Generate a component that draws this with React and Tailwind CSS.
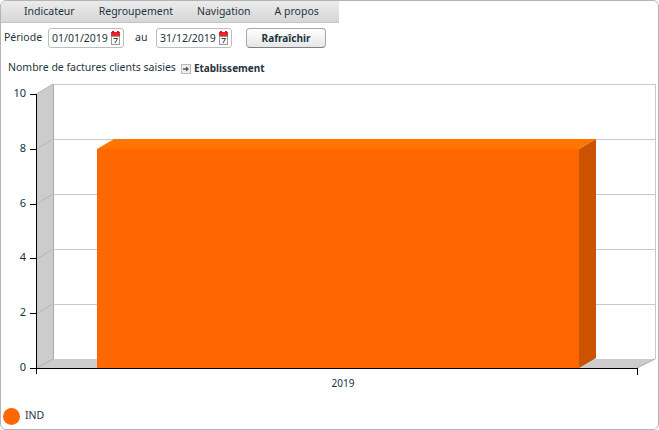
const font = "font-['Noto_Sans','Open_Sans',sans-serif]";

const menus = ['Indicateur', 'Regroupement', 'Navigation', 'A propos'];
const ticks = [
  { label: '10', y: 94 },
  { label: '8', y: 149 },
  { label: '6', y: 204 },
  { label: '4', y: 258 },
  { label: '2', y: 313 },
  { label: '0', y: 368 },
];
const gridLines = [84, 139, 194, 249, 304];

function CalendarIcon() {
  return (
    <svg width="9" height="14" viewBox="0 0 9 14" className="shrink-0">
      <rect x="0" y="1" width="9" height="5" fill="#e8262c" />
      <rect x="1" y="0" width="2" height="2" fill="#c8181e" />
      <rect x="6" y="0" width="2" height="2" fill="#c8181e" />
      <rect x="0.5" y="5.5" width="8" height="8" fill="#f6f6f2" stroke="#9a9a9a" />
      <path d="M2.5 7.5h4L4 12" fill="none" stroke="#444" strokeWidth="1" />
    </svg>
  );
}

function DateField({ value }) {
  return (
    <div className="flex items-center justify-between w-[76px] h-5 pl-[3px] pr-[3px] bg-white border border-[#bdbdbd] rounded-[3px]">
      <span className="text-[10.5px] leading-none">{value}</span>
      <CalendarIcon />
    </div>
  );
}

function Chart() {
  return (
    <svg width="657" height="322" viewBox="0 0 657 322" className="block">
      <g transform="translate(-1 -75)">
        {/* murs gris */}
        <polygon points="36,94 53,84 53,359 36,368" fill="#cccccc" />
        <polygon points="36,368 53,359 655,359 637,368" fill="#cccccc" />
        <path d="M36.5 94 L53 84 M36.5 149 L53 139 M36.5 204 L53 194 M36.5 259 L53 249 M36.5 314 L53 304" stroke="#b5b5b5" fill="none" />
        <path d="M53.5 84 V359 M36.5 368 L53 359 M637 368 L655 359" stroke="#aaaaaa" fill="none" />
        {gridLines.map((y) => (
          <line key={y} x1="53" x2="655" y1={y + 0.5} y2={y + 0.5} stroke="#c8c8c8" />
        ))}
        <line x1="655.5" x2="655.5" y1="84" y2="359" stroke="#c8c8c8" />

        {/* barre 2019 */}
        <polygon points="97,149 114,139 596,139 579,149" fill="#ff7700" />
        <rect x="97" y="149" width="482" height="219" fill="#ff6800" />
        <polygon points="579,149 596,139 596,358 579,368" fill="#cc5300" />

        {/* axes */}
        <line x1="36.5" x2="36.5" y1="94" y2="374" stroke="#000" />
        <line x1="30" x2="638" y1="368.5" y2="368.5" stroke="#000" />
        <line x1="637.5" x2="637.5" y1="368" y2="375" stroke="#000" />
        {ticks.map((t) => (
          <g key={t.label}>
            <line x1="30" x2="36" y1={t.y + 0.5} y2={t.y + 0.5} stroke="#000" />
            <text x="26" y={t.y + 3} textAnchor="end" fontSize="11" fill="#123344">{t.label}</text>
          </g>
        ))}
        <text x="343" y="387" textAnchor="middle" fontSize="10" fill="#123344">2019</text>
      </g>
    </svg>
  );
}

export default function App() {
  return (
    <div className={`${font} w-[659px] h-[430px] bg-white border border-[#b4b4b4] rounded-[6px] overflow-hidden text-[#1f3440] text-[10.5px] flex flex-col`}>
      <div className="flex items-center w-[338px] h-[22px] pl-[23px] gap-[24px] bg-gradient-to-b from-[#ececec] to-[#d6d6d6] border-b border-[#c4c4c4]">
        {menus.map((m) => (
          <span key={m}>{m}</span>
        ))}
      </div>
      <div className="flex items-center h-[28px] pl-[3px] mt-[1px]">
        <span className="w-[44px]">Période</span>
        <DateField value="01/01/2019" />
        <span className="ml-[11px] mr-[8px] w-[13px]">au</span>
        <DateField value="31/12/2019" />
        <button className="ml-[14px] w-[80px] h-5 rounded-[4px] border border-[#a8a8a8] border-b-[#808080] bg-gradient-to-b from-white to-[#e6e6e6] font-bold text-[10px] text-[#1f3440]">
          Rafraîchir
        </button>
      </div>
      <div className="flex items-center h-[14px] pl-[7px] mt-[9px] gap-[5px]">
        <span className="text-[10.5px]">Nombre de factures clients saisies</span>
        <svg width="10" height="10" viewBox="0 0 10 10" className="shrink-0 mt-[2px]">
          <rect x="0.5" y="0.5" width="9" height="9" fill="#eee" stroke="#bbb" />
          <path d="M2 5h4" fill="none" stroke="#555" strokeWidth="1.5" />
          <path d="M5 2.5 8 5 5 7.5z" fill="#555" />
        </svg>
        <span className="font-bold text-[10px] -ml-[2px]">Etablissement</span>
      </div>
      <Chart />
      <div className="flex items-center mt-[11px] pl-[2px] gap-[5px]">
        <span className="w-[17px] h-[17px] rounded-full bg-[#ff6800]" />
        <span className="text-[10.5px] -mt-[1px]">IND</span>
      </div>
    </div>
  );
}
